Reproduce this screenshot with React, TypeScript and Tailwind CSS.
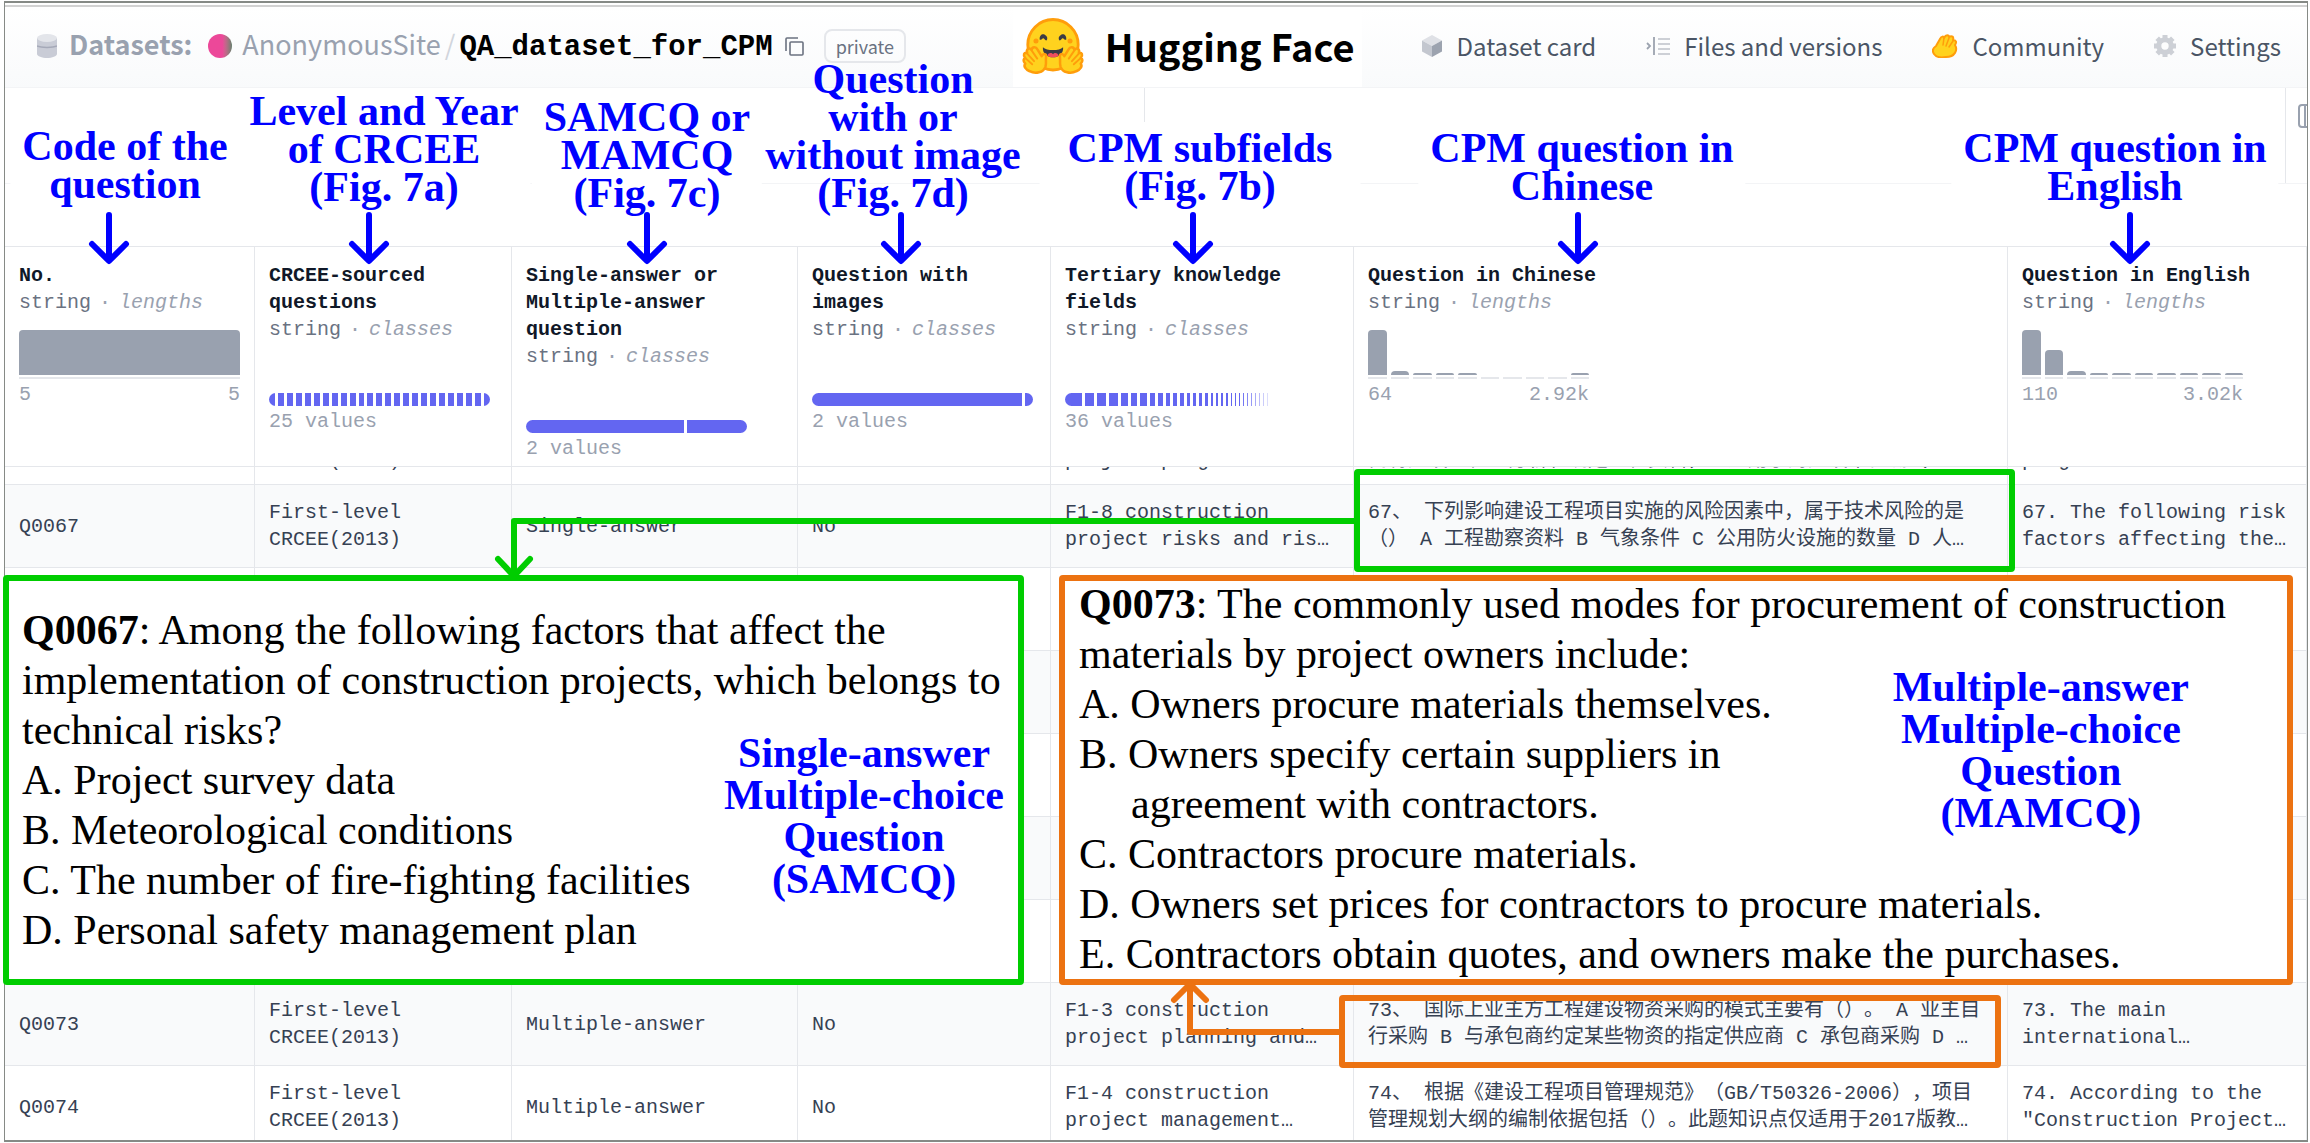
import React from "react";

const MONO = "font-['Liberation_Mono','Noto_Sans_CJK_SC',monospace]";
const SANS = "font-['Noto_Sans_CJK_SC',sans-serif]";
const SERIF = "font-['Liberation_Serif',serif]";

function HuggingFaceLogo() {
  const hand = (
    <>
      <path
        d="M6 74C2 70 3 66 6 65C2 60 4 56 9 57C7 51 12 48 16 52C17 47 23 47 25 51L32 62C35 57 40 58 39 64C38 70 40 72 38 79C35 88 22 91 13 86C6 83 3 78 6 74Z"
        fill="#FFD21E"
        stroke="#FF9D0B"
        strokeWidth="4"
        strokeLinejoin="round"
      />
      <path d="M16 53L25 66M9 58L20 70M7 66L17 75" stroke="#FF9D0B" strokeWidth="3" strokeLinecap="round" fill="none" />
    </>
  );
  return (
    <svg viewBox="0 0 100 92" className="h-[58px] w-[64px]" aria-hidden="true">
      <circle cx="50" cy="44" r="40" fill="#FFD21E" stroke="#FF9D0B" strokeWidth="4.5" />
      <path d="M29 36C28 29 33 26 37 28C41 30 42 34 40 37C37 38 36 33 34 34C32 34 32 37 29 36Z" fill="#3A3B45" />
      <path d="M71 36C72 29 67 26 63 28C59 30 58 34 60 37C63 38 64 33 66 34C68 34 68 37 71 36Z" fill="#3A3B45" />
      <circle cx="23" cy="38" r="4" fill="#FF9D0B" />
      <circle cx="77" cy="38" r="4" fill="#FF9D0B" />
      <path d="M34 48C40 54 60 54 66 48C67 57 60 64 50 64C40 64 33 57 34 48Z" fill="#3A3B45" />
      <path d="M41 61C43 56 48 56 50 59C52 56 57 56 59 61C55 65 45 65 41 61Z" fill="#EF4E5E" />
      <g>{hand}</g>
      <g transform="translate(100 0) scale(-1 1)">{hand}</g>
    </svg>
  );
}

function DatabaseIcon() {
  return (
    <svg viewBox="0 0 20 24" className="h-6 w-5 self-center" aria-hidden="true">
      <path d="M0 4V20C0 22 5 24 10 24S20 22 20 20V4Z" fill="#c9ccd6" />
      <ellipse cx="10" cy="4" rx="10" ry="4" fill="#e3e5ea" />
      <path d="M0 12C4 14 16 14 20 12" stroke="#a5a9b8" strokeWidth="1.5" fill="none" />
    </svg>
  );
}

function CopyIcon() {
  return (
    <svg viewBox="0 0 19 19" className="size-[19px]" fill="none" stroke="#6b7280" strokeWidth="1.6" aria-hidden="true">
      <rect x="5" y="5" width="13" height="13" rx="1" />
      <path d="M1 14V2Q1 1 2 1H13" />
    </svg>
  );
}

function CubeIcon() {
  return (
    <svg viewBox="0 0 20 22" className="h-[22px] w-5" aria-hidden="true">
      <path d="M10 0L20 5.5L10 11L0 5.5Z" fill="#dfe1e6" />
      <path d="M0 5.5L10 11V22L0 16.5Z" fill="#c3c7cf" />
      <path d="M20 5.5L10 11V22L20 16.5Z" fill="#9ca3af" />
    </svg>
  );
}

function FilesIcon() {
  return (
    <svg viewBox="0 0 24 18" className="h-[18px] w-6" fill="none" aria-hidden="true">
      <path d="M1 6L4 9L1 12M8 0V18" stroke="#9ca3af" strokeWidth="1.8" />
      <path d="M12 2H24M12 7H24M12 12H24M12 17H24" stroke="#cdd0d6" strokeWidth="2" />
    </svg>
  );
}

function CommunityIcon() {
  return (
    <svg viewBox="0 0 26 24" className="h-6 w-[26px]" aria-hidden="true">
      <path
        d="M2 20C0 17 1 14 4 12L8 5C9 2 12 2 12 4C14 0 17 1 17 3C20 1 22 3 21 6C24 6 25 8 23 11C26 16 23 23 14 23C8 24 4 23 2 20Z"
        fill="#FFD21E"
        stroke="#FF9D0B"
        strokeWidth="2"
        strokeLinejoin="round"
      />
      <path d="M12 4L11 11M17 4L14 12M21 7L17 13" stroke="#FF9D0B" strokeWidth="1.5" strokeLinecap="round" />
    </svg>
  );
}

function GearIcon() {
  return (
    <svg viewBox="0 0 22 22" className="size-[22px]" aria-hidden="true">
      <circle cx="11" cy="11" r="6.2" fill="none" stroke="#cdd0d6" strokeWidth="5" />
      <path
        d="M11 0V4M11 18V22M0 11H4M18 11H22M3.2 3.2L6 6M16 16L18.8 18.8M3.2 18.8L6 16M16 6L18.8 3.2"
        stroke="#cdd0d6"
        strokeWidth="5"
      />
    </svg>
  );
}

function TabLink({ icon, label }: { icon: React.ReactNode; label: string }) {
  return (
    <a href="#" className="flex items-center gap-3.5">
      {icon}
      <span>{label}</span>
    </a>
  );
}

function Header() {
  return (
    <header
      className={`${SANS} mt-0.5 flex h-[83px] items-center border-t-2 border-b border-t-[#d2d2d2] border-b-gray-100 bg-linear-to-b from-white to-gray-50 pr-[26px] pl-8 leading-9 whitespace-nowrap`}
    >
      <div className="flex items-baseline pb-0.5 text-[27px]">
        <DatabaseIcon />
        <span className="ml-3 font-bold text-gray-400">Datasets:</span>
        <span className="ml-4 size-6 self-center rounded-full bg-linear-to-r from-[#ec4899] from-60% to-[#64806f]" />
        <a href="#" className="ml-2.5 text-gray-400">
          AnonymousSite
        </a>
        <span className="mx-1 text-gray-300">/</span>
        <a href="#" className={`${MONO} text-[29px] font-bold text-black`}>
          QA_dataset_for_CPM
        </a>
        <button type="button" aria-label="Copy dataset name" className="ml-3 self-center">
          <CopyIcon />
        </button>
        <span className="ml-5 self-center rounded-lg border-2 border-gray-200 px-2.5 text-lg leading-[30px] text-gray-500">
          private
        </span>
      </div>
      <div className="mr-[60px] ml-auto flex h-full items-center gap-5 bg-white px-2 pb-0.5">
        <HuggingFaceLogo />
        <span className="text-[38px] font-bold text-black">Hugging Face</span>
      </div>
      <nav className="flex items-center gap-[50px] pb-0.5 text-2xl leading-9 text-gray-600">
        <TabLink icon={<CubeIcon />} label="Dataset card" />
        <TabLink icon={<FilesIcon />} label="Files and versions" />
        <TabLink icon={<CommunityIcon />} label="Community" />
        <TabLink icon={<GearIcon />} label="Settings" />
      </nav>
    </header>
  );
}

function Toolbar() {
  return (
    <div className="h-[158px]">
      <div className="flex h-[96px] border-b border-gray-100">
        <div className="h-[34px] w-[1140px] border-r border-gray-200" />
        <div className="flex-1" />
        <div className="w-[22px] overflow-hidden border-l border-gray-200 pt-4 pl-3">
          <button type="button" aria-label="Columns" className="flex h-6 w-6 rounded border-2 border-gray-400 pl-1">
            <span className="h-full border-l-2 border-gray-400" />
          </button>
        </div>
      </div>
    </div>
  );
}

type Column = {
  title: string[];
  kind: "lengths" | "classes";
  bars: number[];
  from: string;
  to?: string;
};

const COLUMNS: Column[] = [
  { title: ["No."], kind: "lengths", bars: [45], from: "5", to: "5" },
  { title: ["CRCEE-sourced", "questions"], kind: "classes", bars: Array(25).fill(1), from: "25 values" },
  {
    title: ["Single-answer or", "Multiple-answer", "question"],
    kind: "classes",
    bars: [158, 60],
    from: "2 values",
  },
  { title: ["Question with", "images"], kind: "classes", bars: [210, 8], from: "2 values" },
  {
    title: ["Tertiary knowledge", "fields"],
    kind: "classes",
    bars: [
      17, 9, 9, 9, 7, 6, 6, 5, 5, 4, 4, 4, 3, 3, 3, 3, 2, 2, 2, 2, 1, 1, 1, 1, 1, 1, 1, 1, 1, 1, 0, 0, 0, 0, 0, 0,
    ],
    from: "36 values",
  },
  {
    title: ["Question in Chinese"],
    kind: "lengths",
    bars: [45, 4, 2, 2, 2, 0, 0, 0, 0, 2],
    from: "64",
    to: "2.92k",
  },
  {
    title: ["Question in English"],
    kind: "lengths",
    bars: [45, 25, 4, 2, 2, 2, 2, 2, 2, 2],
    from: "110",
    to: "3.02k",
  },
];

function Histogram({ bars }: { bars: number[] }) {
  return (
    <div className="flex h-[49px] gap-1">
      {bars.map((height, i) => (
        <div key={i} className="flex flex-1 flex-col justify-end border-b-2 border-gray-200 pb-0.5">
          <div className="rounded-t bg-gray-400" style={{ height }} />
        </div>
      ))}
    </div>
  );
}

function ClassBar({ bars }: { bars: number[] }) {
  return (
    <div className="flex h-[49px] items-end">
      <div className="flex h-[13px] w-full gap-[3px] overflow-hidden rounded-full">
        {bars.map((width, i) => (
          <div
            key={i}
            className="bg-[#6366f1]"
            style={{ flex: `${width} 1 0px`, opacity: bars.length > 30 && i > 22 ? (31 - i) / 9 : 1 }}
          />
        ))}
      </div>
    </div>
  );
}

function HeaderCell({ column }: { column: Column }) {
  return (
    <th scope="col" className="h-[220px] border-t border-r border-gray-200 pt-[15px] pl-3.5 text-left align-top font-normal">
      {column.title.map((line) => (
        <div key={line} className="font-bold text-gray-900">
          {line}
        </div>
      ))}
      <div className="text-gray-500">
        string<span className="mx-2 text-gray-400">·</span>
        <span className="text-gray-400 italic">{column.kind}</span>
      </div>
      <div className="mt-3.5 w-[221px]">
        {column.kind === "lengths" ? <Histogram bars={column.bars} /> : <ClassBar bars={column.bars} />}
        <div className="mt-0.5 flex justify-between text-gray-400">
          <span>{column.from}</span>
          <span>{column.to}</span>
        </div>
      </div>
    </th>
  );
}

const PREVIOUS_ROW = ["", "CRCEE(2013)", "", "", "project prog…", "需将建设工程、分析和确定工程资料，　适用于对建设单位测试人", "prog…"];

const ROWS: (string[][] | null)[] = [
  [
    ["Q0067"],
    ["First-level", "CRCEE(2013)"],
    ["Single-answer"],
    ["No"],
    ["F1-8 construction", "project risks and ris…"],
    ["67、 下列影响建设工程项目实施的风险因素中，属于技术风险的是", "（） A 工程勘察资料 B 气象条件 C 公用防火设施的数量 D 人…"],
    ["67. The following risk", "factors affecting the…"],
  ],
  null,
  null,
  null,
  null,
  null,
  [
    ["Q0073"],
    ["First-level", "CRCEE(2013)"],
    ["Multiple-answer"],
    ["No"],
    ["F1-3 construction", "project planning and…"],
    ["73、 国际上业主方工程建设物资采购的模式主要有（）。 A 业主自", "行采购 B 与承包商约定某些物资的指定供应商 C 承包商采购 D …"],
    ["73. The main", "international…"],
  ],
  [
    ["Q0074"],
    ["First-level", "CRCEE(2013)"],
    ["Multiple-answer"],
    ["No"],
    ["F1-4 construction", "project management…"],
    ["74、 根据《建设工程项目管理规范》（GB/T50326-2006），项目", "管理规划大纲的编制依据包括（）。此题知识点仅适用于2017版教…"],
    ["74. According to the", "\"Construction Project…"],
  ],
];

function DataTable() {
  return (
    <table
      className={`${MONO} w-full table-fixed border-separate border-spacing-0 text-xl leading-[27px] whitespace-nowrap [text-spacing-trim:space-all]`}
    >
      <colgroup>
        <col className="w-[250px]" />
        <col className="w-[257px]" />
        <col className="w-[286px]" />
        <col className="w-[253px]" />
        <col className="w-[303px]" />
        <col className="w-[654px]" />
        <col />
      </colgroup>
      <thead>
        <tr>
          {COLUMNS.map((column) => (
            <HeaderCell key={column.title[0]} column={column} />
          ))}
        </tr>
      </thead>
      <tbody className="text-gray-700">
        <tr>
          {PREVIOUS_ROW.map((text, i) => (
            <td key={i} className="border-t border-r border-gray-200 p-0 pl-3.5">
              <div className="flex h-[17px] items-end overflow-hidden pb-2.5">{text}</div>
            </td>
          ))}
        </tr>
        {ROWS.map((row, r) => (
          <tr key={r} className="odd:bg-white even:bg-gray-50">
            {COLUMNS.map((column, c) => (
              <td key={column.title[0]} className="h-[83px] border-t border-r border-gray-200 p-0 pl-3.5">
                {row?.[c].map((line) => (
                  <div key={line}>{line}</div>
                ))}
              </td>
            ))}
          </tr>
        ))}
      </tbody>
    </table>
  );
}

function Label({ lines, place }: { lines: string[]; place: string }) {
  return (
    <div
      className={`absolute -translate-x-1/2 text-center leading-[38px] font-bold whitespace-nowrap text-[#0000ff] ${place}`}
    >
      {lines.map((line) => (
        <div key={line}>{line}</div>
      ))}
    </div>
  );
}

function DownArrow({ place }: { place: string }) {
  return (
    <svg
      viewBox="0 0 42 54"
      className={`absolute top-[211px] h-[54px] w-[42px] -translate-x-1/2 ${place}`}
      fill="none"
      stroke="#0000ff"
      strokeWidth="6"
      strokeLinecap="round"
      strokeLinejoin="round"
      aria-hidden="true"
    >
      <path d="M21 4V49M4 33L21 50L38 33" />
    </svg>
  );
}

function Annotations() {
  return (
    <div className={`${SERIF} text-[42px]`}>
      <Label place="left-[125px] top-[127px] bg-white px-3" lines={["Code of the", "question"]} />
      <Label place="left-[384px] top-[92px] bg-white px-3" lines={["Level and Year", "of CRCEE", "(Fig. 7a)"]} />
      <Label place="left-[647px] top-[98px] bg-white px-3" lines={["SAMCQ or", "MAMCQ", "(Fig. 7c)"]} />
      <Label place="left-[893px] top-[60px]" lines={["Question", "with or", "without image", "(Fig. 7d)"]} />
      <Label place="left-[1200px] top-[129px] bg-white px-7" lines={["CPM subfields", "(Fig. 7b)"]} />
      <Label place="left-[1582px] top-[129px] bg-white px-3" lines={["CPM question in", "Chinese"]} />
      <Label place="left-[2115px] top-[129px] bg-white px-3" lines={["CPM question in", "English"]} />

      <DownArrow place="left-[109px]" />
      <DownArrow place="left-[369px]" />
      <DownArrow place="left-[647px]" />
      <DownArrow place="left-[901px]" />
      <DownArrow place="left-[1193px]" />
      <DownArrow place="left-[1578px]" />
      <DownArrow place="left-[2130px]" />

      <div className="absolute top-[469px] left-[1354px] h-[103px] w-[661px] rounded-sm border-6 border-[#00cd00]" />
      <div className="absolute top-[995px] left-[1339px] h-[73px] w-[662px] rounded-sm border-6 border-[#ec7211]" />

      <section className="absolute top-[575px] left-[3px] h-[410px] w-[1021px] rounded-sm border-6 border-[#00cd00] bg-white pt-6 pl-[13px] leading-[50px] text-black">
        <p>
          <b>Q0067</b>: Among the following factors that affect the
          <br />
          implementation of construction projects, which belongs to
          <br />
          technical risks?
        </p>
        <p>A. Project survey data</p>
        <p>B. Meteorological conditions</p>
        <p>C. The number of fire-fighting facilities</p>
        <p>D. Personal safety management plan</p>
        <div className="absolute top-[151px] right-3.5 text-center leading-[42px] font-bold text-[#0000ff]">
          Single-answer
          <br />
          Multiple-choice
          <br />
          Question
          <br />
          (SAMCQ)
        </div>
      </section>

      <section className="absolute top-[575px] left-[1059px] h-[410px] w-[1234px] rounded-sm border-6 border-[#ec7211] bg-white pl-3.5 leading-[50px] text-black">
        <div className="-mt-0.5">
          <p>
            <b>Q0073</b>: The commonly used modes for procurement of construction
            <br />
            materials by project owners include:
          </p>
          <p>A. Owners procure materials themselves.</p>
          <p>B. Owners specify certain suppliers in</p>
          <p className="pl-[52px]">agreement with contractors.</p>
          <p>C. Contractors procure materials.</p>
          <p>D. Owners set prices for contractors to procure materials.</p>
          <p>E. Contractors obtain quotes, and owners make the purchases.</p>
        </div>
        <div className="absolute top-[85px] right-[98px] text-center leading-[42px] font-bold text-[#0000ff]">
          Multiple-answer
          <br />
          Multiple-choice
          <br />
          Question
          <br />
          (MAMCQ)
        </div>
      </section>

      <svg
        viewBox="0 0 870 64"
        className="absolute top-[515px] left-[490px] h-16 w-[870px]"
        fill="none"
        stroke="#00cd00"
        strokeWidth="6"
        strokeLinecap="round"
        strokeLinejoin="round"
        aria-hidden="true"
      >
        <path d="M866 6H24V60M8 44L24 61L40 44" />
      </svg>
      <svg
        viewBox="0 0 180 60"
        className="absolute top-[978px] left-[1165px] h-[60px] w-[180px]"
        fill="none"
        stroke="#ec7211"
        strokeWidth="6"
        strokeLinecap="round"
        strokeLinejoin="round"
        aria-hidden="true"
      >
        <path d="M176 54H25V6M9 22L25 6L41 22" />
      </svg>
    </div>
  );
}

export default function App() {
  return (
    <main className="relative h-screen overflow-hidden bg-white pt-px pr-0.5 pb-px pl-1">
      <div className="h-full overflow-hidden border border-y-2 border-[#868a86]">
        <Header />
        <Toolbar />
        <DataTable />
      </div>
      <Annotations />
    </main>
  );
}
